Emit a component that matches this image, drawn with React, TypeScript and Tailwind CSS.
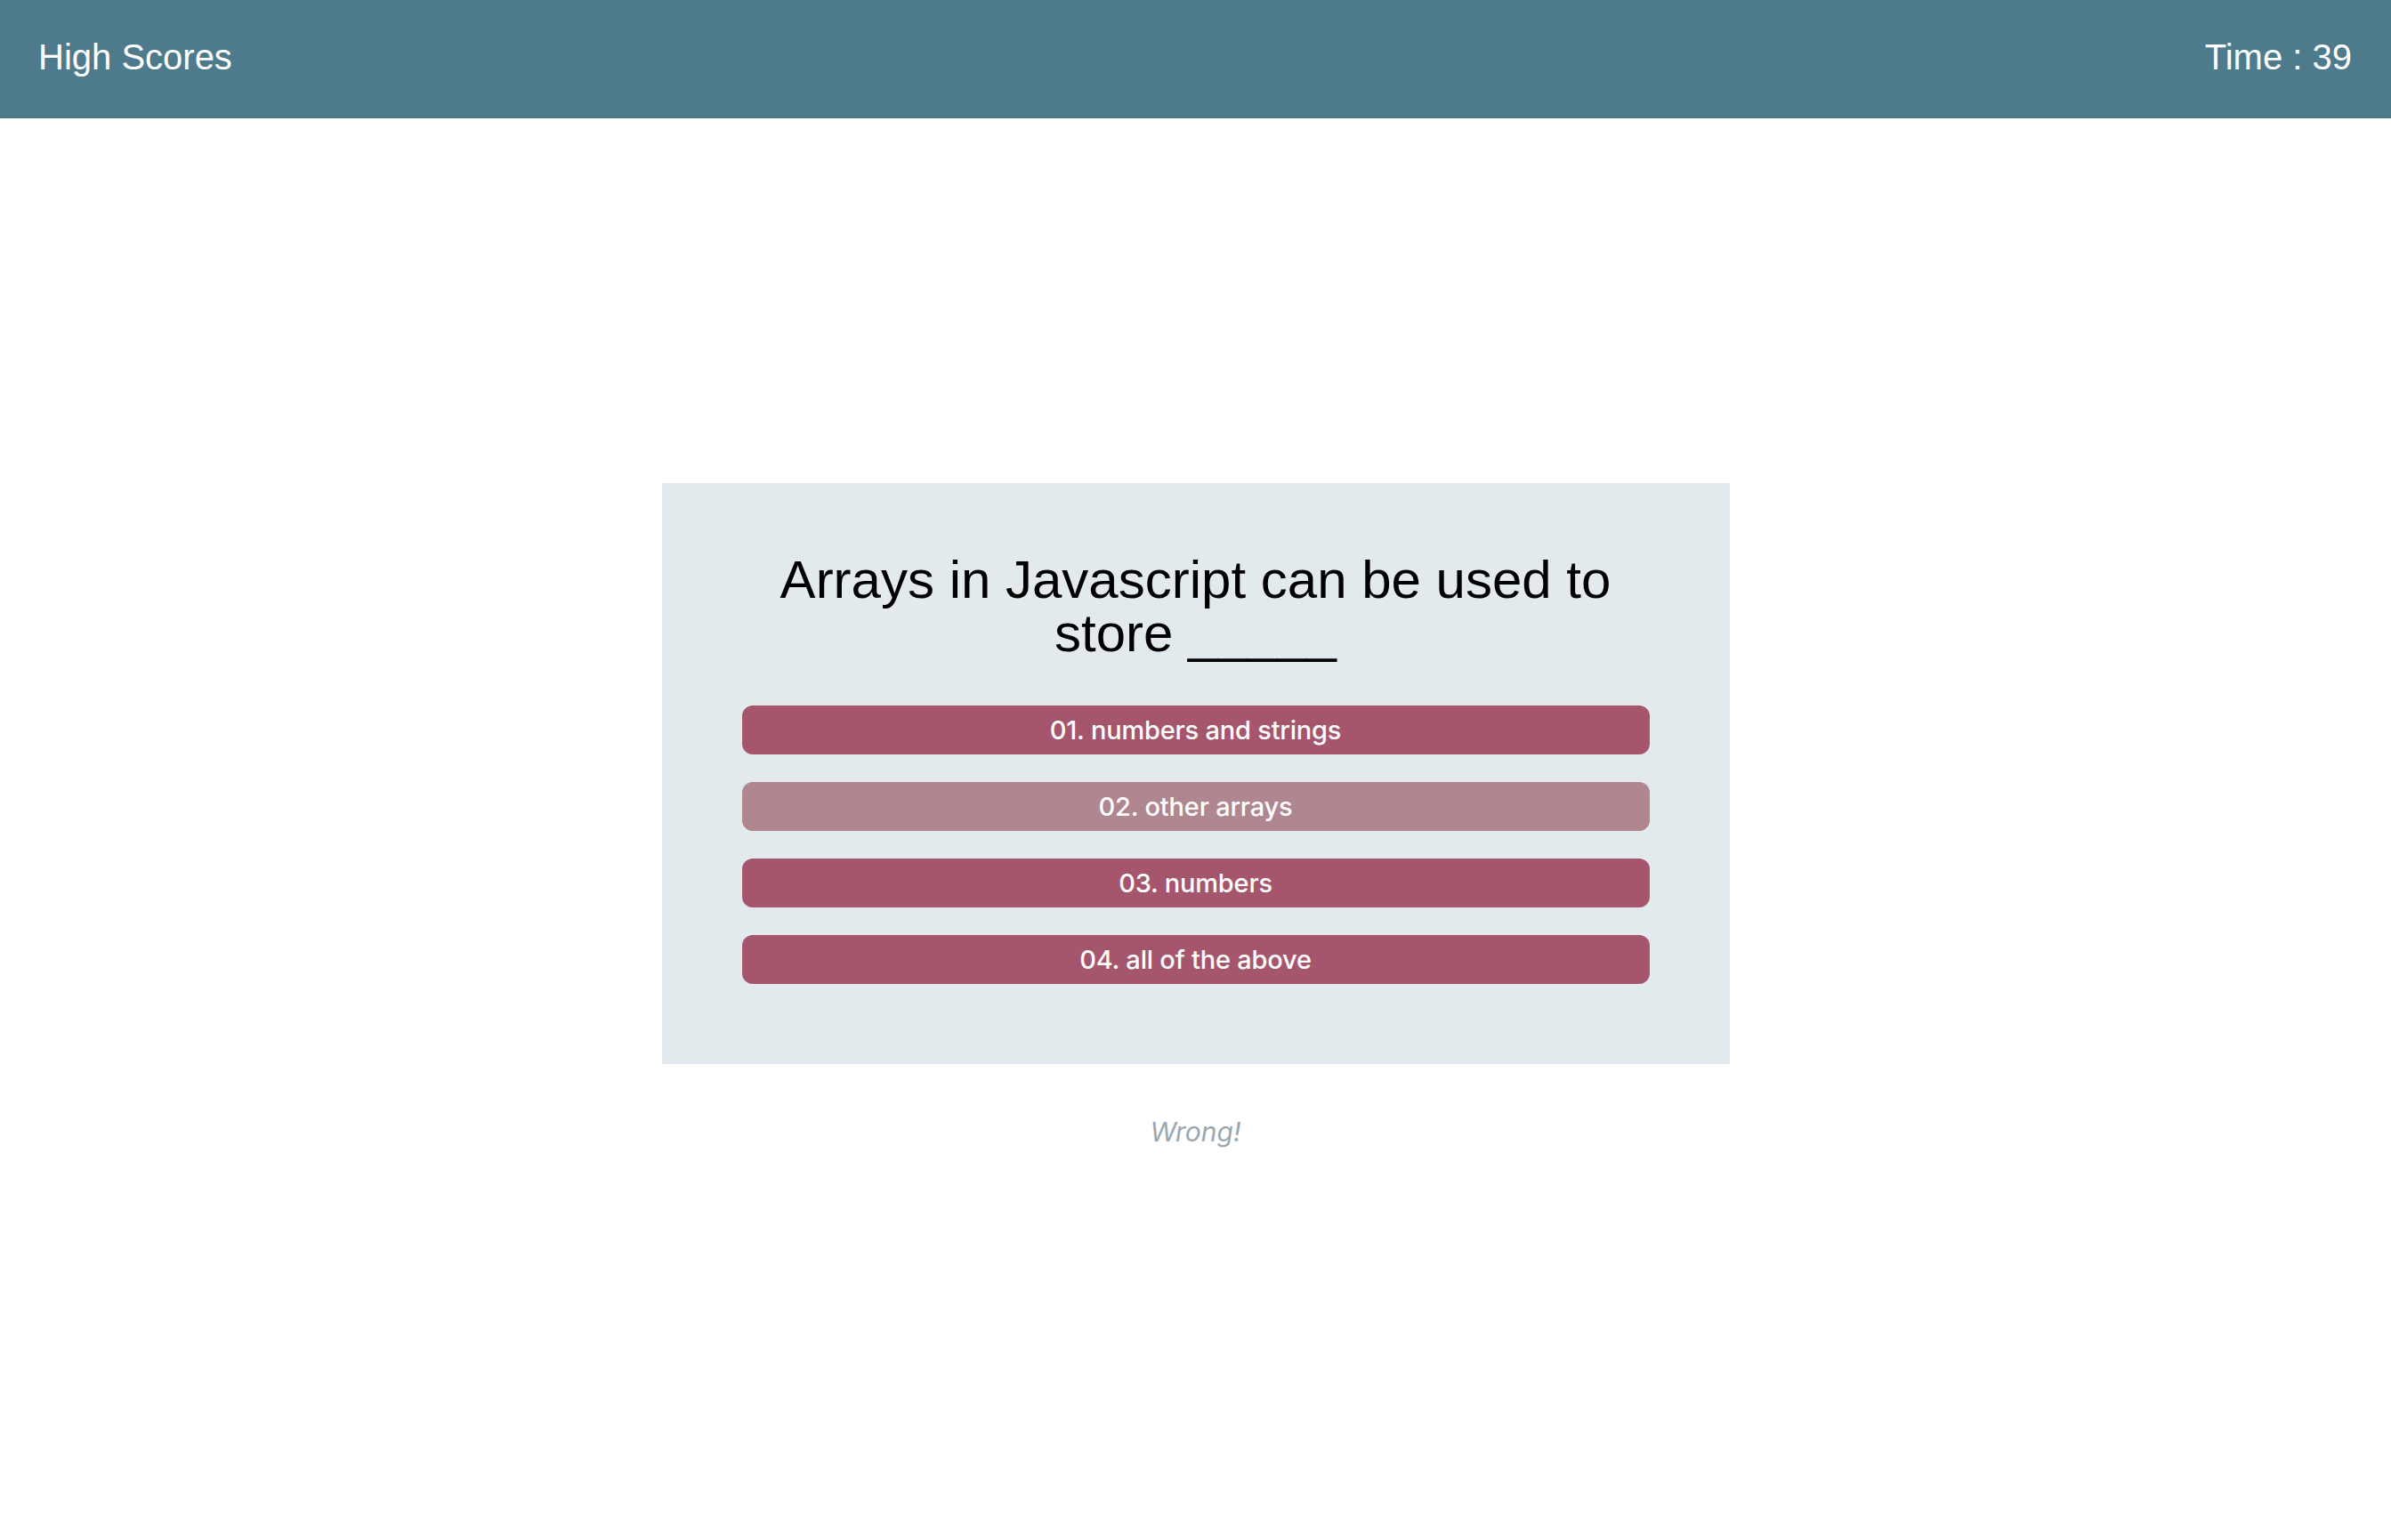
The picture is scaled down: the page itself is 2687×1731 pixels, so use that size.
export default function App() {
  const answers = [
    { t: "01. numbers and strings", faded: false },
    { t: "02. other arrays", faded: true },
    { t: "03. numbers", faded: false },
    { t: "04. all of the above", faded: false },
  ];
  return (
    <div className="min-h-screen bg-white">
      <header className="h-[133px] bg-[#4e7b8c] flex items-center justify-between pl-[43px] pr-[44px] pb-[5px] text-white text-[40px] font-['Liberation_Sans',Arial,sans-serif]">
        <span>High Scores</span>
        <span>Time : 39</span>
      </header>
      <main className="flex flex-col items-center pt-[410px]">
        <section className="w-[1200px] bg-[#e2eaee] pt-[79px] pb-[90px] flex flex-col items-center">
          <h2 className="w-[1000px] text-center text-black text-[60px] leading-[60px] font-['Liberation_Sans',Arial,sans-serif]">
            Arrays in Javascript can be used to store _____
          </h2>
          <div className="w-[1020px] mt-[51px] flex flex-col gap-[31px]">
            {answers.map((a) => (
              <button
                key={a.t}
                className={
                  "h-[55px] w-full rounded-[12px] text-white text-[29px] font-medium tracking-[-0.2px] font-['Inter',sans-serif] flex items-center justify-center " +
                  (a.faded ? "bg-[#b08690]" : "bg-[#a5566d]")
                }
              >
                {a.t}
              </button>
            ))}
          </div>
        </section>
        <p className="mt-[54px] text-[30px] italic text-[#9ba7ae] font-['Inter',sans-serif]">Wrong!</p>
      </main>
    </div>
  );
}
